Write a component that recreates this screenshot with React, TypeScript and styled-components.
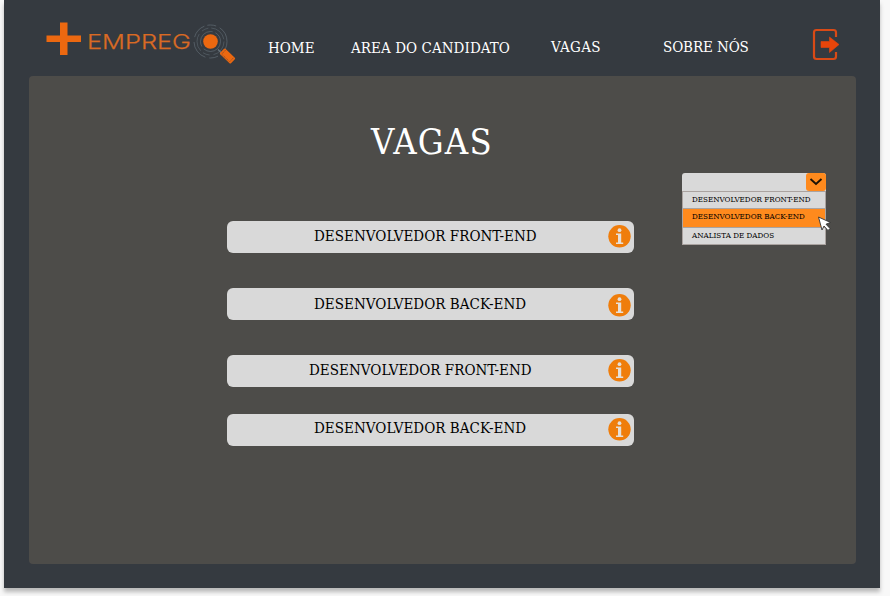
import React from "react";
import styled, { createGlobalStyle } from "styled-components";

const GlobalStyle = createGlobalStyle`
  * { box-sizing: border-box; }
  body { margin: 0; background: #f8f8f8; overflow: hidden; }
  #root { height: 596px; }
`;

const Page = styled.div`
  width: 876px;
  height: 588px;
  margin-left: 4px;
  padding: 0 24px 24px 25px;
  background: #353a40;
  box-shadow: 0 4px 4px rgba(0, 0, 0, 0.25);
  font-family: "DejaVu Serif Condensed", "DejaVu Serif", serif;
  font-stretch: condensed;
`;

const Header = styled.header`
  display: flex;
  height: 76px;
  padding-left: 13px;
`;

const Logo = styled.svg`
  flex: none;
  width: 200px;
  height: 76px;
`;

const Nav = styled.nav`
  display: flex;
  flex: none;
  width: 570px;
`;

const NavLink = styled.a<{ $left: number; $top?: number; $width: number; $spacing?: number }>`
  flex: none;
  width: ${(p) => p.$width}px;
  margin-left: ${(p) => p.$left}px;
  padding-top: ${(p) => p.$top ?? 38}px;
  color: #fff;
  font-size: 15px;
  line-height: 20px;
  letter-spacing: ${(p) => p.$spacing ?? 0}px;
  white-space: nowrap;
`;

const ExitIcon = styled.svg`
  flex: none;
  width: 28px;
  height: 34px;
  margin-top: 28px;
`;

const Panel = styled.main`
  display: grid;
  grid-template-columns: 407px 144px;
  grid-template-rows: 97px auto;
  column-gap: 48px;
  height: 488px;
  padding-left: 198px;
  border-radius: 4px;
  background: #4d4c49;
`;

const Title = styled.h1`
  grid-column: 1;
  margin: 43px 0 0 144px;
  color: #fff;
  font-size: 36px;
  font-weight: 400;
  line-height: 46px;
  letter-spacing: 1.2px;
`;

const JobList = styled.div`
  grid-column: 1;
  grid-row: 2;
  padding-top: 48px;
`;

const Job = styled.div<{ $gap: number }>`
  display: flex;
  height: 32px;
  margin-bottom: ${(p) => p.$gap}px;
  border-radius: 6px;
  background: #d9d9d9;
`;

const JobName = styled.span<{ $left: number; $top: number }>`
  width: 380px;
  padding-left: ${(p) => p.$left}px;
  padding-top: ${(p) => p.$top}px;
  color: #000;
  font-size: 15px;
  line-height: 20px;
  letter-spacing: 0.04px;
  white-space: nowrap;
`;

const InfoIcon = styled.svg<{ $top: number }>`
  flex: none;
  width: 24px;
  height: 24px;
  margin-top: ${(p) => p.$top}px;
`;

const Select = styled.div`
  grid-column: 2;
  grid-row: 2;
  position: relative;
  height: 72px;
`;

const SelectField = styled.div`
  display: flex;
  justify-content: flex-end;
  height: 18px;
  border-radius: 3px 3px 0 0;
  background: #d9d9d9;
`;

const SelectButton = styled.div`
  display: grid;
  place-items: center;
  width: 20px;
  height: 18px;
  border-radius: 3px;
  background: #ff8a1d;
`;

const Option = styled.div<{ $active?: boolean; $lift?: number }>`
  height: 18px;
  padding-left: 9px;
  padding-bottom: ${(p) => p.$lift ?? 0}px;
  display: flex;
  align-items: center;
  border: 1px solid #aaa3a0;
  border-bottom-width: ${(p) => (p.$active ? 0 : 1)}px;
  border-top-width: ${(p) => (p.$active ? 0 : 1)}px;
  background: ${(p) => (p.$active ? "#ff8a1d" : "#d9d9d9")};
  color: #000;
  font-size: 8px;
  line-height: 12px;
  letter-spacing: 0.01px;
  white-space: nowrap;
`;

const Cursor = styled.svg`
  position: absolute;
  left: 135px;
  top: 42px;
  width: 16px;
  height: 18px;
`;

const jobs = [
  { name: "DESENVOLVEDOR FRONT-END", left: 87, top: 5, icon: 3, gap: 35 },
  { name: "DESENVOLVEDOR BACK-END", left: 87, top: 6, icon: 5, gap: 35 },
  { name: "DESENVOLVEDOR FRONT-END", left: 82, top: 5, icon: 3, gap: 27 },
  { name: "DESENVOLVEDOR BACK-END", left: 87, top: 4, icon: 3, gap: 0 },
];

function BrandLogo() {
  return (
    <Logo viewBox="42 0 200 76" role="img" aria-label="Mais Emprego">
      <path d="M60 22.500h7.500V35.500H81v6.500H67.500V55H60V42H46.500V35.500H60z" fill="#ec6810" />
      <text
        x="87"
        y="49"
        fill="#d96a24"
        stroke="#d96a24"
        strokeWidth="0.250"
        fontFamily="Inter, sans-serif"
        fontSize="20.5"
        fontWeight="300"
        textLength="104"
        lengthAdjust="spacingAndGlyphs"
      >
        EMPREG
      </text>
      <g fill="none" stroke="#68747c" strokeWidth="0.6">
        <circle cx="210.500" cy="41.500" r="16.500" strokeDasharray="15 3 9 4 20 5" />
        <circle cx="210.500" cy="41.500" r="13.500" strokeDasharray="18 4 7 3" opacity="0.8" />
        <circle cx="210.500" cy="41.500" r="10" strokeDasharray="23 3" />
      </g>
      <circle cx="210.500" cy="41.500" r="7.300" fill="#ec6810" />
      <path d="M218 49.500l4 4" stroke="#68747c" strokeWidth="1.200" />
      <g transform="translate(227.500 56) rotate(44)">
        <rect x="-7.500" y="-3.800" width="15" height="7.600" rx="1" fill="#ec6810" />
        <path d="M-5.500 -2.800v5.600M5.500 -2.800v5.600M-4.500 2.700h9" stroke="#7c4930" strokeWidth="0.700" strokeDasharray="1.500 0.700" />
      </g>
    </Logo>
  );
}

function Info({ top }: { top: number }) {
  return (
    <InfoIcon $top={top} viewBox="0 0 24 24">
      <circle cx="12.500" cy="12.300" r="11.200" fill="#ef7d0b" />
      <circle cx="12.500" cy="6.200" r="1.900" fill="#e6dfd7" />
      <path d="M9 9.600h5.200v8.800h2v1.500H9v-1.500h2v-7.300H9z" fill="#e6dfd7" />
    </InfoIcon>
  );
}

export default function App() {
  return (
    <>
      <GlobalStyle />
      <Page>
        <Header>
          <BrandLogo />
          <Nav>
            <NavLink $left={26} $width={47}>HOME</NavLink>
            <NavLink $left={36} $width={160} $spacing={0.07}>AREA DO CANDIDATO</NavLink>
            <NavLink $left={40} $width={52} $top={37} $spacing={0.3}>VAGAS</NavLink>
            <NavLink $left={60} $width={88} $top={37} $spacing={-0.1}>SOBRE NÓS</NavLink>
          </Nav>
          <ExitIcon viewBox="0 0 28 34">
            <path
              d="M24 9V4.500Q24 2 21.500 2H4.500Q2 2 2 4.500v24Q2 31 4.500 31h17Q24 31 24 28.500V24"
              fill="none"
              stroke="#d94a16"
              strokeWidth="2.200"
            />
            <path d="M9 13.500H17.500V9L27 16.500L17.500 24.500V19.500H9z" fill="#e8450a" stroke="#e8450a" strokeWidth="0.600" strokeLinejoin="round" />
          </ExitIcon>
        </Header>
        <Panel>
          <Title>VAGAS</Title>
          <JobList>
            {jobs.map((job, i) => (
              <Job key={i} $gap={job.gap}>
                <JobName $left={job.left} $top={job.top}>{job.name}</JobName>
                <Info top={job.icon} />
              </Job>
            ))}
          </JobList>
          <Select>
            <SelectField>
              <SelectButton>
                <svg width="14" height="10" viewBox="0 0 14 10">
                  <path d="M1.500 2l5.500 5 5.500-5" fill="none" stroke="#1c1206" strokeWidth="1.900" />
                </svg>
              </SelectButton>
            </SelectField>
            <Option $lift={1}>DESENVOLVEDOR FRONT-END</Option>
            <Option $active $lift={3}>DESENVOLVEDOR BACK-END</Option>
            <Option $lift={1}>ANALISTA DE DADOS</Option>
            <Cursor viewBox="0 0 16 18">
              <path d="M1.500 2l12 5.500-4.500 1.700 4 4.300-2 2-4-4.500-2 4z" fill="#fff" stroke="#333" strokeWidth="0.900" />
            </Cursor>
          </Select>
        </Panel>
      </Page>
    </>
  );
}
